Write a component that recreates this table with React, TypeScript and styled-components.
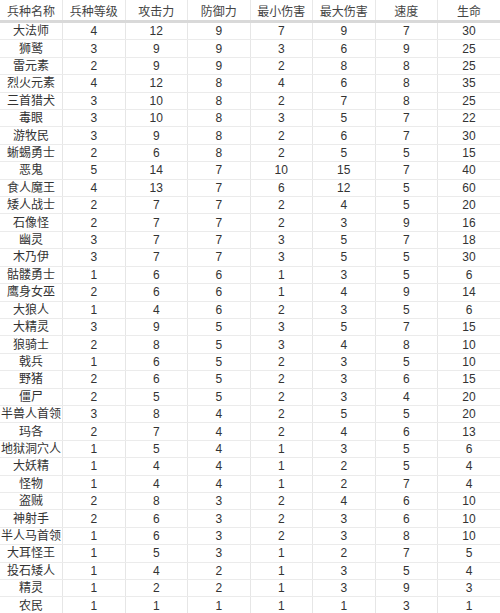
import styled, { createGlobalStyle } from 'styled-components';

const GlobalStyle = createGlobalStyle`
  html, body {
    margin: 0;
    padding: 0;
    background: #ffffff;
  }
  body {
    font-family: 'Liberation Sans', 'Noto Sans CJK SC', sans-serif;
    color: #333;
  }
`;

const Sheet = styled.table`
  width: 500px;
  table-layout: fixed;
  border-collapse: collapse;
  font-size: 12px;
`;

const HeadCell = styled.th`
  height: 20px;
  padding: 0;
  font-weight: normal;
  color: #444;
  text-align: center;
  white-space: nowrap;
  border-bottom: 3px solid #d9d9d9;
  border-left: 1px solid #e8e8e8;

  &:first-child {
    border-left: none;
  }
`;

const Cell = styled.td`
  height: 16.42px;
  padding: 0;
  text-align: center;
  white-space: nowrap;
  color: #333;
  line-height: 16px;
  border-bottom: 1px solid #ebebeb;
  border-left: 1px solid #e6e6e6;

  &:first-child {
    border-left: none;
  }
`;

const columns = ['兵种名称', '兵种等级', '攻击力', '防御力', '最小伤害', '最大伤害', '速度', '生命'];

const rows: [string, ...number[]][] = [
  ['大法师', 4, 12, 9, 7, 9, 7, 30],
  ['狮鹫', 3, 9, 9, 3, 6, 9, 25],
  ['雷元素', 2, 9, 9, 2, 8, 8, 25],
  ['烈火元素', 4, 12, 8, 4, 6, 8, 35],
  ['三首猎犬', 3, 10, 8, 2, 7, 8, 25],
  ['毒眼', 3, 10, 8, 3, 5, 7, 22],
  ['游牧民', 3, 9, 8, 2, 6, 7, 30],
  ['蜥蜴勇士', 2, 6, 8, 2, 5, 5, 15],
  ['恶鬼', 5, 14, 7, 10, 15, 7, 40],
  ['食人魔王', 4, 13, 7, 6, 12, 5, 60],
  ['矮人战士', 2, 7, 7, 2, 4, 5, 20],
  ['石像怪', 2, 7, 7, 2, 3, 9, 16],
  ['幽灵', 3, 7, 7, 3, 5, 7, 18],
  ['木乃伊', 3, 7, 7, 3, 5, 5, 30],
  ['骷髅勇士', 1, 6, 6, 1, 3, 5, 6],
  ['鹰身女巫', 2, 6, 6, 1, 4, 9, 14],
  ['大狼人', 1, 4, 6, 2, 3, 5, 6],
  ['大精灵', 3, 9, 5, 3, 5, 7, 15],
  ['狼骑士', 2, 8, 5, 3, 4, 8, 10],
  ['戟兵', 1, 6, 5, 2, 3, 5, 10],
  ['野猪', 2, 6, 5, 2, 3, 6, 15],
  ['僵尸', 2, 5, 5, 2, 3, 4, 20],
  ['半兽人首领', 3, 8, 4, 2, 5, 5, 20],
  ['玛各', 2, 7, 4, 2, 4, 6, 13],
  ['地狱洞穴人', 1, 5, 4, 1, 3, 5, 6],
  ['大妖精', 1, 4, 4, 1, 2, 5, 4],
  ['怪物', 1, 4, 4, 1, 2, 7, 4],
  ['盗贼', 2, 8, 3, 2, 4, 6, 10],
  ['神射手', 2, 6, 3, 2, 3, 6, 10],
  ['半人马首领', 1, 6, 3, 2, 3, 8, 10],
  ['大耳怪王', 1, 5, 3, 1, 2, 7, 5],
  ['投石矮人', 1, 4, 2, 1, 3, 5, 4],
  ['精灵', 1, 2, 2, 1, 3, 9, 3],
  ['农民', 1, 1, 1, 1, 1, 3, 1],
];

export default function App() {
  return (
    <>
      <GlobalStyle />
      <Sheet>
        <thead>
          <tr>
            {columns.map((c) => (
              <HeadCell key={c}>{c}</HeadCell>
            ))}
          </tr>
        </thead>
        <tbody>
          {rows.map((r) => (
            <tr key={r[0]}>
              {r.map((v, i) => (
                <Cell key={i}>{v}</Cell>
              ))}
            </tr>
          ))}
        </tbody>
      </Sheet>
    </>
  );
}
